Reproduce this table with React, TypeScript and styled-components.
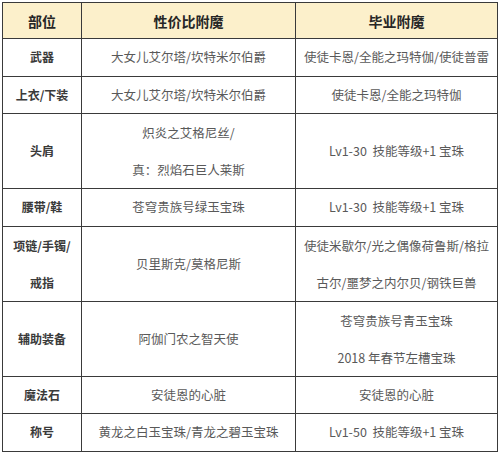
import React from "react";
import styled, { createGlobalStyle } from "styled-components";

const GlobalStyle = createGlobalStyle`
	body {
		margin: 0;
		background: #ffffff;
		font-family: "Noto Sans CJK SC", "Noto Sans", sans-serif;
	}
`;

const Page = styled.div`
	padding: 2px;
	width: 499px;
	box-sizing: border-box;
`;

const Table = styled.table`
	width: 495px;
	border-collapse: collapse;
	table-layout: fixed;
	border: 1.5px solid #3a3a3a;
`;

const HeadCell = styled.th`
	height: 35px;
	padding: 0;
	background: #fcf0cb;
	color: #262626;
	font-size: 14px;
	font-weight: 700;
	text-align: center;
	border: 1.5px solid #3a3a3a;
`;

const Row = styled.tr<{ $tall?: boolean }>`
	height: ${(p) => (p.$tall ? "74.5px" : "37.5px")};
`;

const LabelCell = styled.td`
	padding: 0;
	color: #3a3a3a;
	font-size: 12px;
	font-weight: 700;
	text-align: center;
	border: 1.5px solid #3a3a3a;
	line-height: 36px;
`;

const TextCell = styled.td`
	padding: 0;
	color: #595959;
	font-size: 12.5px;
	text-align: center;
	border: 1.5px solid #3a3a3a;
	line-height: 36px;
	white-space: pre;
`;

const Line = styled.div`
	line-height: 37px;
`;

type Item = {
	part: string[];
	value: string[];
	best: string[];
	tall?: boolean;
};

const rows: Item[] = [
	{ part: ["武器"], value: ["大女儿艾尔塔/坎特米尔伯爵"], best: ["使徒卡恩/全能之玛特伽/使徒普雷"] },
	{ part: ["上衣/下装"], value: ["大女儿艾尔塔/坎特米尔伯爵"], best: ["使徒卡恩/全能之玛特伽"] },
	{ part: ["头肩"], value: ["炽炎之艾格尼丝/", "真：烈焰石巨人莱斯"], best: ["Lv1-30  技能等级+1 宝珠"], tall: true },
	{ part: ["腰带/鞋"], value: ["苍穹贵族号绿玉宝珠"], best: ["Lv1-30  技能等级+1 宝珠"] },
	{
		part: ["项链/手镯/", "戒指"],
		value: ["贝里斯克/莫格尼斯"],
		best: ["使徒米歇尔/光之偶像荷鲁斯/格拉", "古尔/噩梦之内尔贝/钢铁巨兽"],
		tall: true,
	},
	{ part: ["辅助装备"], value: ["阿伽门农之智天使"], best: ["苍穹贵族号青玉宝珠", "2018 年春节左槽宝珠"], tall: true },
	{ part: ["魔法石"], value: ["安徒恩的心脏"], best: ["安徒恩的心脏"] },
	{ part: ["称号"], value: ["黄龙之白玉宝珠/青龙之碧玉宝珠"], best: ["Lv1-50  技能等级+1 宝珠"] },
];

const lines = (list: string[]) =>
	list.length === 1 ? list[0] : list.map((t) => <Line key={t}>{t}</Line>);

const App = () => {
	return (
		<Page>
			<GlobalStyle />
			<Table>
				<colgroup>
					<col style={{ width: 79 }} />
					<col style={{ width: 214 }} />
					<col style={{ width: 202 }} />
				</colgroup>
				<thead>
					<tr>
						<HeadCell>部位</HeadCell>
						<HeadCell>性价比附魔</HeadCell>
						<HeadCell>毕业附魔</HeadCell>
					</tr>
				</thead>
				<tbody>
					{rows.map((r) => (
						<Row key={r.part.join("")} $tall={r.tall}>
							<LabelCell>{lines(r.part)}</LabelCell>
							<TextCell>{lines(r.value)}</TextCell>
							<TextCell>{lines(r.best)}</TextCell>
						</Row>
					))}
				</tbody>
			</Table>
		</Page>
	);
};

export default App;
